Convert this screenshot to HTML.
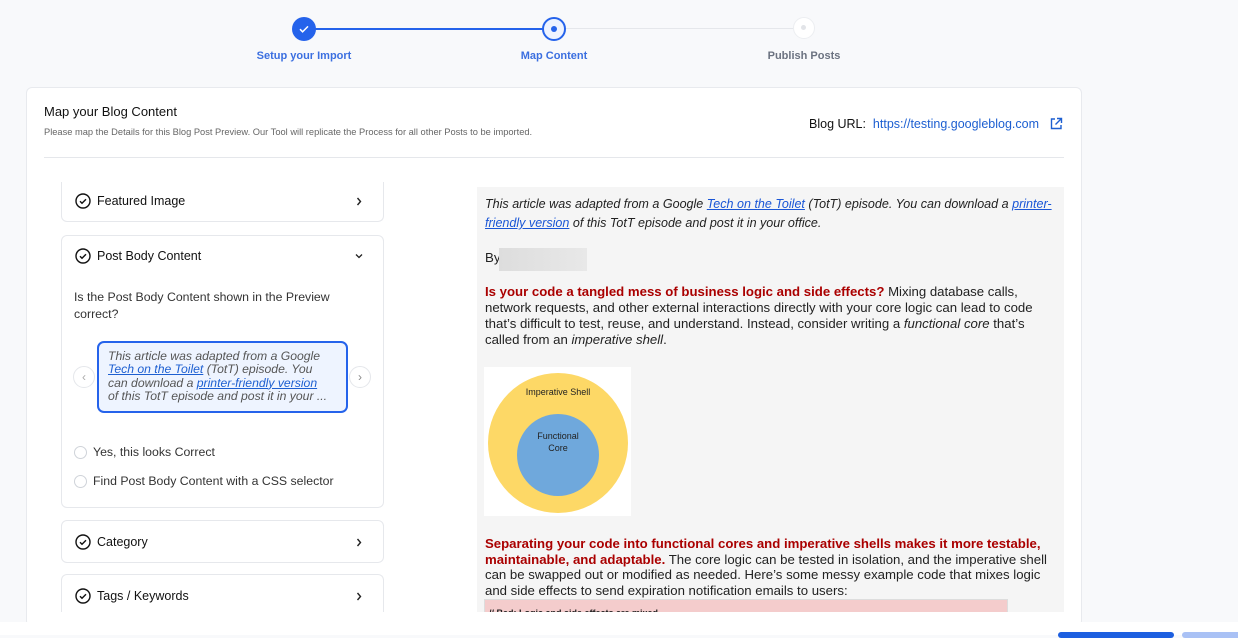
<!DOCTYPE html>
<html><head><meta charset="utf-8"><style>
*{box-sizing:border-box;margin:0;padding:0}
body{width:1238px;height:635px;overflow:hidden;background:#f8f9fb;font-family:"Liberation Sans",sans-serif;position:relative;color:#111}
.a{position:absolute}
.step{font-size:11px;font-weight:bold;text-align:center;width:140px}
.card{position:absolute;left:26px;top:87px;width:1056px;height:540px;background:#fff;border:1px solid #e8eaee;border-radius:6px}
.acc{position:absolute;left:61px;width:323px;background:#fff;border:1px solid #e6e8ec;border-radius:6px}
.acc .t{position:absolute;left:35px;font-size:12.5px;color:#111}
.chk{position:absolute;left:13px;width:16px;height:16px}
.chev{position:absolute;right:21px;width:6px;height:9px}
.pv{position:absolute;left:477px;top:187px;width:587px;height:425px;background:#f5f5f5;overflow:hidden;font-size:13.3px;line-height:16px;color:#222}
.pv a{color:#1a56d6;text-decoration:underline}
.red{color:#a00;font-weight:bold}
.radio{position:absolute;left:74px;width:13px;height:13px;border:1px solid #cfd3d9;border-radius:50%}
</style></head><body>
<div class="a" style="left:304px;top:28px;width:250px;height:2px;background:#2563eb"></div>
<div class="a" style="left:554px;top:28px;width:250px;height:1px;background:#e5e7eb"></div>
<div class="a" style="left:292px;top:17px;width:24px;height:24px;border-radius:50%;background:#2563eb"></div>
<svg class="a" style="left:298px;top:23px" width="12" height="12" viewBox="0 0 12 12"><path d="M2 6.2l2.6 2.6L10 3.4" fill="none" stroke="#fff" stroke-width="1.5"/></svg>
<div class="a" style="left:542px;top:17px;width:24px;height:24px;border-radius:50%;background:#eef3ff;border:2px solid #2563eb"></div>
<div class="a" style="left:551px;top:26px;width:6px;height:6px;border-radius:50%;background:#2563eb"></div>
<div class="a" style="left:793px;top:17px;width:22px;height:22px;border-radius:50%;background:#fff;border:1px solid #eceef1"></div>
<div class="a" style="left:801px;top:25px;width:5px;height:5px;border-radius:50%;background:#e2e4e8"></div>
<div class="a step" style="left:234px;top:50px;color:#3b6fe0">Setup your Import</div>
<div class="a step" style="left:484px;top:50px;color:#3b6fe0">Map Content</div>
<div class="a step" style="left:734px;top:50px;color:#6b7280">Publish Posts</div>

<div class="card"></div>
<div class="a" style="left:44px;top:104px;font-size:13px;color:#111">Map your Blog Content</div>
<div class="a" style="left:44px;top:127px;font-size:9.3px;color:#666">Please map the Details for this Blog Post Preview. Our Tool will replicate the Process for all other Posts to be imported.</div>
<div class="a" style="left:809px;top:117px;font-size:12.5px;color:#111">Blog URL:&nbsp; <span style="color:#1d5fd1">https://testing.googleblog.com</span></div>
<svg class="a" style="left:1049px;top:117px" width="14" height="14" viewBox="0 0 14 14" fill="none" stroke="#1d5fd1" stroke-width="1.4"><path d="M6 2H2.5v9.5H12V8M8 1.5h4.5V6M12.5 1.5L6.5 7.5"/></svg>
<div class="a" style="left:44px;top:157px;width:1020px;height:1px;background:#e5e7eb"></div>

<div class="acc" style="top:182px;height:40px;border-top:none;border-radius:0 0 6px 6px"><svg class="chk" style="top:11px" viewBox="0 0 16 16"><circle cx="8" cy="8" r="7" fill="none" stroke="#111" stroke-width="1.4"/><path d="M5 8.2l2 2 4-4" fill="none" stroke="#111" stroke-width="1.4"/></svg><div class="t" style="top:12px">Featured Image</div><svg class="chev" style="top:15px" viewBox="0 0 6 9"><path d="M1.5 1l3 3.5-3 3.5" fill="none" stroke="#222" stroke-width="1.4"/></svg></div>
<div class="acc" style="top:235px;height:273px"><svg class="chk" style="top:12px" viewBox="0 0 16 16"><circle cx="8" cy="8" r="7" fill="none" stroke="#111" stroke-width="1.4"/><path d="M5 8.2l2 2 4-4" fill="none" stroke="#111" stroke-width="1.4"/></svg><div class="t" style="top:13px">Post Body Content</div><svg class="a" style="right:20px;top:17px" width="8" height="6" viewBox="0 0 8 6"><path d="M1 1.5l3 3 3-3" fill="none" stroke="#222" stroke-width="1.3"/></svg></div>
<div class="a" style="left:74px;top:289px;font-size:12.3px;line-height:17px;color:#333;width:290px">Is the Post Body Content shown in the Preview correct?</div>
<div class="a" style="left:73px;top:366px;width:22px;height:22px;border-radius:50%;border:1px solid #e5e7eb;background:#fff;color:#aaa;font-size:12px;text-align:center;line-height:20px">‹</div>
<div class="a" style="left:349px;top:366px;width:22px;height:22px;border-radius:50%;border:1px solid #e5e7eb;background:#fff;color:#888;font-size:12px;text-align:center;line-height:20px">›</div>
<div class="a" style="left:97px;top:341px;width:251px;height:72px;border:2px solid #2563eb;border-radius:7px;background:#eef4ff;padding:7px 9px;font-size:12.2px;line-height:13.3px;font-style:italic;color:#555;white-space:nowrap">This article was adapted from a Google<br><span style="color:#1d5fd1;text-decoration:underline">Tech on the Toilet</span> (TotT) episode. You<br>can download a <span style="color:#1d5fd1;text-decoration:underline">printer-friendly version</span><br>of this TotT episode and post it in your ...</div>
<div class="radio" style="top:446px"></div><div class="a" style="left:93px;top:445px;font-size:12.3px;color:#333">Yes, this looks Correct</div>
<div class="radio" style="top:475px"></div><div class="a" style="left:93px;top:474px;font-size:12.3px;color:#333">Find Post Body Content with a CSS selector</div>
<div class="acc" style="top:520px;height:43px"><svg class="chk" style="top:13px" viewBox="0 0 16 16"><circle cx="8" cy="8" r="7" fill="none" stroke="#111" stroke-width="1.4"/><path d="M5 8.2l2 2 4-4" fill="none" stroke="#111" stroke-width="1.4"/></svg><div class="t" style="top:14px">Category</div><svg class="chev" style="top:17px" viewBox="0 0 6 9"><path d="M1.5 1l3 3.5-3 3.5" fill="none" stroke="#222" stroke-width="1.4"/></svg></div>
<div class="acc" style="top:574px;height:38px;border-bottom:none;border-radius:6px 6px 0 0"><svg class="chk" style="top:13px" viewBox="0 0 16 16"><circle cx="8" cy="8" r="7" fill="none" stroke="#111" stroke-width="1.4"/><path d="M5 8.2l2 2 4-4" fill="none" stroke="#111" stroke-width="1.4"/></svg><div class="t" style="top:14px">Tags / Keywords</div><svg class="chev" style="top:17px" viewBox="0 0 6 9"><path d="M1.5 1l3 3.5-3 3.5" fill="none" stroke="#222" stroke-width="1.4"/></svg></div>

<div class="pv">
<div class="a" style="left:8px;top:8px;font-style:italic;line-height:19px;white-space:nowrap;font-size:12.55px">This article was adapted from a Google <a>Tech on the Toilet</a> (TotT) episode. You can download a <a>printer-</a><br><a>friendly version</a> of this TotT episode and post it in your office.</div>
<div class="a" style="left:8px;top:63px">By</div>
<div class="a" style="left:22px;top:61px;width:88px;height:23px;background:linear-gradient(90deg,#ddd,#e8e8e8)"></div>
<div class="a" style="left:8px;top:97px;white-space:nowrap;font-size:13.2px"><span class="red">Is your code a tangled mess of business logic and side effects?</span> Mixing database calls,<br>network requests, and other external interactions directly with your core logic can lead to code<br>that’s difficult to test, reuse, and understand. Instead, consider writing a <i>functional core</i> that’s<br>called from an <i>imperative shell</i>.</div>
<div class="a" style="left:7px;top:180px;width:147px;height:149px;background:#fff"></div>
<div class="a" style="left:11px;top:186px;width:140px;height:140px;border-radius:50%;background:#fdd866"></div>
<div class="a" style="left:40px;top:227px;width:82px;height:82px;border-radius:50%;background:#6fa8dc"></div>
<div class="a" style="left:11px;top:197px;width:140px;text-align:center;font-size:9px;color:#222">Imperative Shell</div>
<div class="a" style="left:40px;top:243px;width:82px;text-align:center;font-size:9px;line-height:12px;color:#222">Functional<br>Core</div>
<div class="a" style="left:8px;top:349px;white-space:nowrap;font-size:13.2px;line-height:15.5px"><span class="red">Separating your code into functional cores and imperative shells makes it more testable,<br>maintainable, and adaptable.</span> The core logic can be tested in isolation, and the imperative shell<br>can be swapped out or modified as needed. Here’s some messy example code that mixes logic<br>and side effects to send expiration notification emails to users:</div>
<div class="a" style="left:7px;top:412px;width:524px;height:20px;background:#f4cccc;border:1px solid #ddd;font-size:9px;font-weight:bold;padding:5px 4px">// Bad: Logic and side effects are mixed</div>
</div>
<div class="a" style="left:0;top:622px;width:1238px;height:13px;background:#fff"></div>
<div class="a" style="left:1082px;top:590px;width:156px;height:32px;background:#f8f9fb"></div>
<div class="a" style="left:1058px;top:632px;width:116px;height:6px;border-radius:4px;background:#1d5fe0"></div>
<div class="a" style="left:1182px;top:632px;width:60px;height:6px;border-radius:4px;background:#a9c1f5"></div>
</body></html>
